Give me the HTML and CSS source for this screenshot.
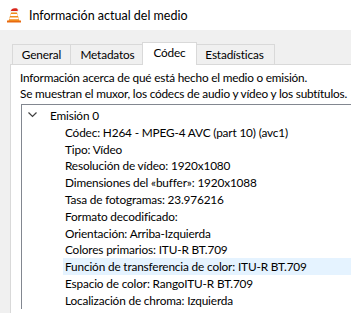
FILE: index.html
```html
<!DOCTYPE html>
<html lang="es">
<head>
    <meta charset="UTF-8">
    <title>Información actual del medio</title>
    <link rel="stylesheet" href="styles.css">
</head>
<body>

    <!-- Title bar -->
    <div class="titlebar">
        <svg class="app-icon" width="16" height="16" viewBox="0 0 16 16">
            <!-- base -->
            <path d="M1 13.5 L15 13.5 L15 15.5 L1 15.5 Z" fill="#e86a10"/>
            <!-- cone -->
            <path d="M5.5 4 L10.5 4 L13.5 14 L2.5 14 Z" fill="#f18a1c"/>
            <path d="M4.8 7 L11.2 7 L11.8 9 L4.2 9 Z" fill="#ffffff"/>
            <path d="M3.8 10.5 L12.2 10.5 L12.8 12.3 L3.2 12.3 Z" fill="#ffffff"/>
            <!-- hat -->
            <path d="M4.5 4.5 C5 1.5 8 0.5 11 1.5 L12.5 3 L11.5 4.5 Z" fill="#d9261c"/>
            <rect x="4" y="4" width="8" height="1.6" rx="0.8" fill="#f4f4f4"/>
            <circle cx="12.6" cy="3" r="1.1" fill="#f4f4f4"/>
        </svg>
        <span class="title">Información actual del medio</span>
    </div>

    <div class="window">
        <!-- Tabs -->
        <div class="tabs">
            <div class="tab tab-general">General</div>
            <div class="tab tab-meta">Metadatos</div>
            <div class="tab tab-codec active">Códec</div>
            <div class="tab tab-stats">Estadísticas</div>
        </div>

        <div class="panel">
            <p class="desc">Información acerca de qué está hecho el medio o emisión.<br>
            Se muestran el muxor, los códecs de audio y vídeo y los subtítulos.</p>

            <!-- Stream tree -->
            <div class="tree">
                <div class="row parent">
                    <svg class="arrow" width="9" height="6" viewBox="0 0 9 6">
                        <path d="M0.5 0.5 L4.5 4.5 L8.5 0.5" fill="none" stroke="#404040" stroke-width="1.2"/>
                    </svg>
                    Emisión 0
                </div>
                <div class="row child">Códec: H264 - MPEG-4 AVC (part 10) (avc1)</div>
                <div class="row child">Tipo: Vídeo</div>
                <div class="row child">Resolución de vídeo: 1920x1080</div>
                <div class="row child">Dimensiones del «buffer»: 1920x1088</div>
                <div class="row child">Tasa de fotogramas: 23.976216</div>
                <div class="row child">Formato decodificado:</div>
                <div class="row child">Orientación: Arriba-Izquierda</div>
                <div class="row child">Colores primarios: ITU-R BT.709</div>
                <div class="row child hover">Función de transferencia de color: ITU-R BT.709</div>
                <div class="row child">Espacio de color: RangoITU-R BT.709</div>
                <div class="row child">Localización de chroma: Izquierda</div>
            </div>
        </div>
    </div>

</body>
</html>
```

FILE: styles.css
```css
body {
    margin: 0;
    width: 351px;
    height: 313px;
    overflow: hidden;
    font-family: Lato, "Noto Sans", sans-serif;
    font-size: 11.8px;
    letter-spacing: -0.15px;
    color: #000;
    background-color: #f0f0f0;
}

.titlebar {
    height: 30px;
    background-color: #fff;
    display: flex;
    align-items: center;
    padding-left: 6px;
    gap: 7px;
}

.title {
    font-size: 12.5px;
    letter-spacing: 0;
}

.window {
    padding: 11px 0 0 10px;
}

.tabs {
    display: flex;
    align-items: flex-end;
    padding-left: 2px;
    height: 23px;
    position: relative;
    z-index: 1;
}

.tab {
    height: 19px;
    line-height: 19px;
    text-align: center;
    border: 1px solid #d9d9d9;
    border-bottom: none;
    border-right: none;
    background-color: #f0f0f0;
}

.tab-general {
    width: 57px;
}

.tab-meta {
    width: 73px;
}

.tab-codec {
    width: 53px;
}

.tab-stats {
    width: 79px;
}

.tab:last-child {
    border-right: 1px solid #d9d9d9;
}

.tab.active {
    height: 22px;
    line-height: 20px;
    background-color: #fff;
    margin: 0 -2px -1px;
    border-right: 1px solid #d9d9d9;
    position: relative;
}

.tab.active + .tab {
    border-left: none;
}

.panel {
    background-color: #fff;
    border: 1px solid #d9d9d9;
    border-right: none;
    height: 260px;
}

.desc {
    margin: 5px 0 0 9px;
    line-height: 16px;
    letter-spacing: -0.2px;
    white-space: nowrap;
}

.tree {
    margin: 2px 0 0 10px;
    border-top: 1px solid #828790;
    border-left: 1px solid #828790;
    padding-top: 2px;
}

.row {
    height: 16.8px;
    line-height: 17px;
    white-space: nowrap;
}

.parent {
    display: flex;
    align-items: center;
    padding-left: 6px;
}

.arrow {
    margin-right: 13px;
}

.child {
    padding-left: 43px;
}

.hover {
    background-color: #e5f3ff;
    margin-left: 41px;
    padding-left: 2px;
}
```
